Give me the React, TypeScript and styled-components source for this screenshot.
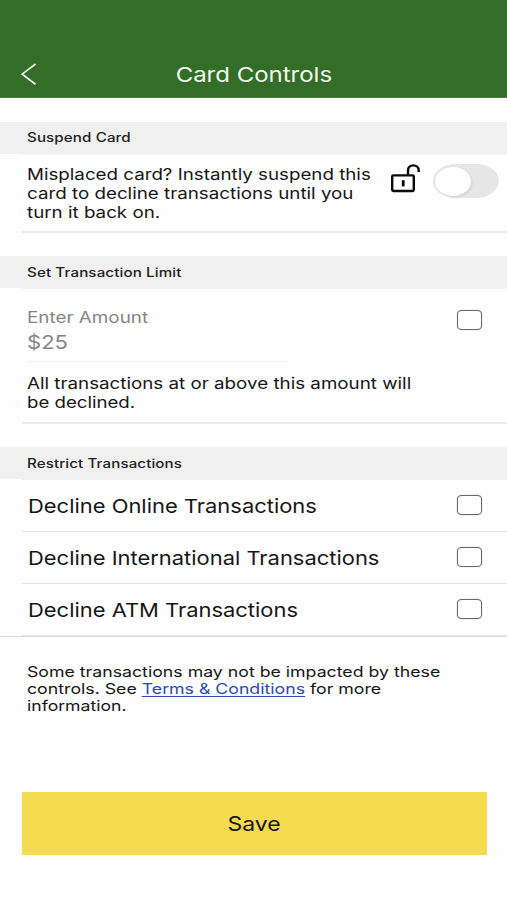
import React from "react";
import styled, { createGlobalStyle } from "styled-components";

const GlobalStyle = createGlobalStyle`
  *, *::before, *::after { box-sizing: border-box; }
  body {
    margin: 0;
    background: #fefefe;
    color: #161616;
    font-family: Inter, "Liberation Sans", sans-serif;
  }
`;

const Screen = styled.div`
  width: 507px;
  height: 900px;
  overflow: hidden;
  display: flex;
  flex-direction: column;
  background: #fefefe;
`;

/* Wide lettering: a line of text stretched sideways from its origin. */
const Wide = styled.span<{ $x: number; $origin?: string }>`
  display: block;
  width: max-content;
  white-space: nowrap;
  transform: scaleX(${(p) => p.$x});
  transform-origin: ${(p) => p.$origin ?? "left"} center;
`;

const Header = styled.header`
  flex: none;
  height: 98px;
  padding: 50px 0 0;
  display: grid;
  grid-template-columns: 60px 387px 60px;
  align-items: center;
  background: #346d28;
  border-bottom: 1px solid #4f8045;
  color: #f3faf0;
`;

const BackButton = styled.button`
  display: flex;
  padding: 0 0 0 20px;
  border: 0;
  background: none;
  color: inherit;
`;

const Title = styled.h1`
  margin: 0;
  padding-top: 3px;
  display: flex;
  justify-content: center;
  font-size: 20.5px;
  line-height: 26px;
  font-weight: 400;
`;

const SectionTitle = styled.h2<{ $gap: number; $lift?: number }>`
  flex: none;
  margin: ${(p) => p.$gap}px 0 0;
  height: 32px;
  padding: 0 0 ${(p) => p.$lift ?? 0}px 27px;
  display: flex;
  align-items: center;
  background: #f0f0f0;
  color: #222222;
  font-size: 12.4px;
  font-weight: 450;
  letter-spacing: 0.1px;
`;

const Panel = styled.section<{ $height: number }>`
  flex: none;
  display: flex;
  align-items: flex-start;
  height: ${(p) => p.$height}px;
  margin-left: 22px;
  padding-left: 5px;
  border-top: 1px solid #f4f4f4;
  border-bottom: 2px solid #ececec;
`;

const Copy = styled.p<{ $top: number }>`
  margin: 0;
  padding-top: ${(p) => p.$top}px;
  font-size: 16px;
  line-height: 19px;
`;

const SuspendCopy = styled(Copy)`
  width: 363px;
`;

const LockSlot = styled.div`
  display: flex;
  width: 43px;
  padding-top: 8px;
`;

const Switch = styled.button`
  width: 66px;
  height: 34px;
  margin-top: 9px;
  padding: 2px;
  border: 0;
  border-radius: 23px / 17px;
  background: #e6e6e6;
`;

const Knob = styled.span`
  display: block;
  width: 36px;
  height: 29px;
  border-radius: 19px / 15px;
  background: #fefefe;
  box-shadow: 1px 1px 3px rgba(0, 0, 0, 0.1);
`;

const LimitBody = styled.div`
  width: 430px;
`;

const AmountField = styled.div`
  width: 261px;
  height: 73px;
  padding-top: 17px;
  border-bottom: 1px solid #f3f3f3;
  color: #858585;
`;

const AmountLabel = styled.div`
  font-size: 16px;
  line-height: 22px;
`;

const AmountValue = styled.div`
  font-size: 19px;
  line-height: 26px;
  padding-top: 2px;
`;

const Checkbox = styled.button<{ $top?: number }>`
  flex: none;
  width: 25px;
  height: 20px;
  margin-top: ${(p) => p.$top ?? 0}px;
  padding: 0;
  border: 1.5px solid #6a6a6a;
  border-radius: 5px / 4px;
  background: #fefefe;
  box-shadow: 0 0 1px #8a8a8a;
`;

const OptionList = styled.div`
  flex: none;
  margin-left: 22px;
  border-top: 1px solid #efefef;
`;

const OptionRow = styled.div`
  display: flex;
  align-items: center;
  justify-content: space-between;
  height: 52px;
  padding: 0 25px 0 6px;
  border-bottom: 1px solid #e6e6e6;
  font-size: 19.3px;
`;

const ListEnd = styled.hr`
  flex: none;
  width: 100%;
  height: 1px;
  margin: 0;
  border: 0;
  background: #dadada;
`;

const Notice = styled.p`
  flex: none;
  height: 155px;
  margin: 0;
  padding: 27px 0 0 27px;
  font-size: 14.6px;
  line-height: 17px;
`;

const TermsLink = styled.a`
  color: #2c49b0;
  text-decoration: underline;
  text-decoration-thickness: 1px;
  text-underline-offset: 2px;
`;

const SaveButton = styled.button`
  flex: none;
  display: flex;
  align-items: center;
  justify-content: center;
  width: 465px;
  height: 63px;
  margin-left: 21.5px;
  border: 0;
  background: #f6db50;
  color: #161605;
  font: 400 20px Inter, "Liberation Sans", sans-serif;
`;

const options = [
  "Decline Online Transactions",
  "Decline International Transactions",
  "Decline ATM Transactions",
];

function BackIcon() {
  return (
    <svg width="18" height="24" viewBox="0 0 18 24" fill="none" stroke="currentColor" strokeWidth="1.7">
      <path d="M15.5 2 2.2 12.2 15.5 22.3" />
    </svg>
  );
}

function UnlockedIcon() {
  return (
    <svg width="32" height="30" viewBox="0 0 32 30" fill="none" stroke="#0b0b0b" strokeWidth="2.4">
      <rect x="2.2" y="12.4" width="21.6" height="15.6" rx="1.2" />
      <path d="M18 12.5V7.5C18 4 20.3 2.4 23.3 2.4S28.7 4.2 28.7 7.4V9" />
      <path d="M13.2 17.2v6.2" strokeWidth="2.8" />
    </svg>
  );
}

export default function App() {
  return (
    <Screen>
      <GlobalStyle />
      <Header>
        <BackButton aria-label="Back">
          <BackIcon />
        </BackButton>
        <Title>
          <Wide $x={1.17} $origin="center">Card Controls</Wide>
        </Title>
      </Header>

      <SectionTitle $gap={24} $lift={1}>
        <Wide $x={1.22}>Suspend Card</Wide>
      </SectionTitle>
      <Panel $height={79}>
        <SuspendCopy $top={10}>
          <Wide $x={1.171}>Misplaced card? Instantly suspend this</Wide>
          <Wide $x={1.173}>card to decline transactions until you</Wide>
          <Wide $x={1.173}>turn it back on.</Wide>
        </SuspendCopy>
        <LockSlot>
          <UnlockedIcon />
        </LockSlot>
        <Switch role="switch" aria-checked={false} aria-label="Suspend card">
          <Knob />
        </Switch>
      </Panel>

      <SectionTitle $gap={23}>
        <Wide $x={1.222}>Set Transaction Limit</Wide>
      </SectionTitle>
      <Panel $height={136}>
        <LimitBody>
          <AmountField>
            <AmountLabel>
              <Wide $x={1.178}>Enter Amount</Wide>
            </AmountLabel>
            <AmountValue>
              <Wide $x={1.16}>$25</Wide>
            </AmountValue>
          </AmountField>
          <Copy $top={12}>
            <Wide $x={1.173}>All transactions at or above this amount will</Wide>
            <Wide $x={1.165}>be declined.</Wide>
          </Copy>
        </LimitBody>
        <Checkbox $top={21} role="checkbox" aria-checked={false} aria-label="Set limit" />
      </Panel>

      <SectionTitle $gap={23}>
        <Wide $x={1.218}>Restrict Transactions</Wide>
      </SectionTitle>
      <OptionList>
        {options.map((label) => (
          <OptionRow key={label}>
            <Wide $x={1.137}>{label}</Wide>
            <Checkbox $top={-1} role="checkbox" aria-checked={false} aria-label={label} />
          </OptionRow>
        ))}
      </OptionList>
      <ListEnd />

      <Notice>
        <Wide $x={1.214}>Some transactions may not be impacted by these</Wide>
        <Wide $x={1.214}>
          controls. See <TermsLink>Terms &amp; Conditions</TermsLink> for more
        </Wide>
        <Wide $x={1.206}>information.</Wide>
      </Notice>
      <SaveButton>
        <Wide $x={1.15} $origin="center">Save</Wide>
      </SaveButton>
    </Screen>
  );
}
